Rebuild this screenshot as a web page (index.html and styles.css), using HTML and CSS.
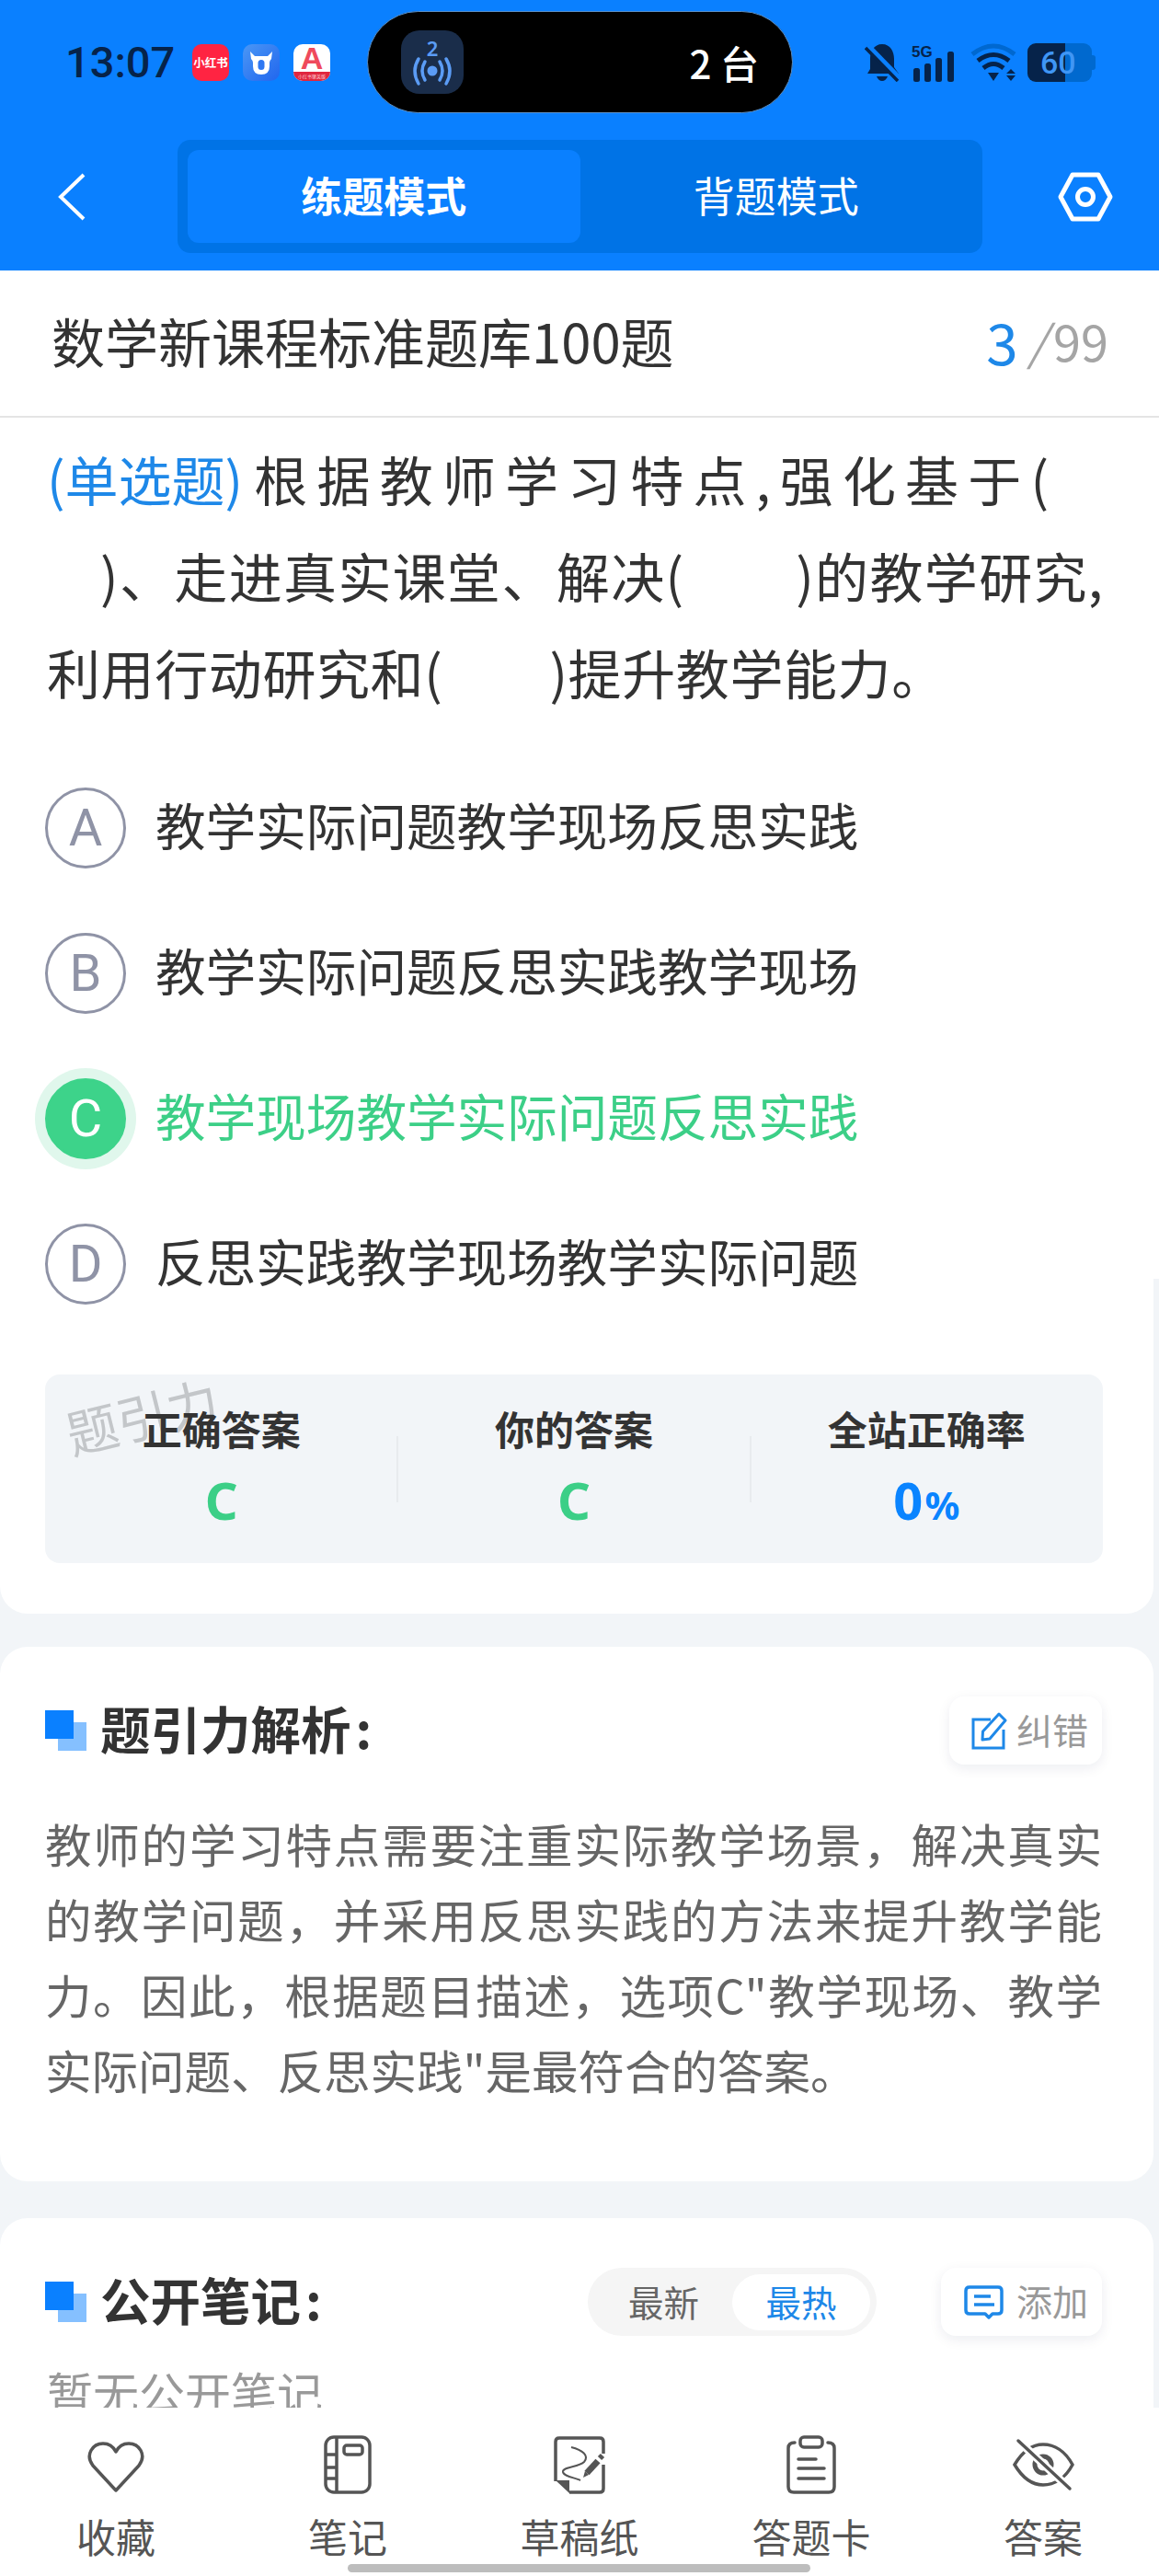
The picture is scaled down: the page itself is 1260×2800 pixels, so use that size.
FILE: index.html
```html
<!DOCTYPE html>
<html>
<head>
    <meta name="viewport" content="width=device-width, initial-scale=1">
    <meta charset="UTF-8">
    <title>题引力</title>
    <link rel="stylesheet" href="styles.css">
</head>
<body>
    <div id="page">
        <header class="topbar">
            <div class="statusrow">
                <span class="time">13:07</span>
                <div class="appicons">
                    <div class="appicon red">小红书</div>
                    <div class="appicon bluebull">
                        <svg width="40" height="40" viewBox="0 0 40 40">
                            <path d="M8 8 L13 13 H27 L32 8 L31 16 Q29 18 29 20 V24 Q29 33 20 33 Q11 33 11 24 V20 Q11 18 9 16 Z" fill="#fff"/>
                            <rect x="16.500" y="17" width="7" height="11" rx="3.500" fill="#2f78f2"/>
                        </svg>
                    </div>
                    <div class="appicon whitea">
                        <span class="aletter">A</span>
                        <span class="aband">小红书聚英版</span>
                    </div>
                </div>
                <div class="island">
                    <div class="casttile">
                        <svg width="68" height="69" viewBox="0 0 68 69" fill="none" stroke="#5b9cf5" stroke-width="3.500" stroke-linecap="round">
                            <text x="34" y="28" text-anchor="middle" class="casttwo">2</text>
                            <circle cx="34" cy="44" r="5.500" fill="#5b9cf5" stroke="none"/>
                            <path d="M26 34 Q20 44 26 54"/>
                            <path d="M42 34 Q48 44 42 54"/>
                            <path d="M19 31 Q11 44 19 58"/>
                            <path d="M49 31 Q57 44 49 58"/>
                        </svg>
                    </div>
                    <span class="islandtext">2 台</span>
                </div>
                <div class="statusicons">
                    <svg width="38" height="42" viewBox="0 0 38 42">
                        <path d="M19 1 C28 1 32 9 32 17 V26 L37 33 H3 L6 28 V17 C6 9 10 1 19 1Z" fill="#06234a"/>
                        <path d="M13 36 H25 Q23 41 19 41 Q15 41 13 36Z" fill="#06234a"/>
                        <path d="M2 2 L36 37" stroke="#0a80ff" stroke-width="7"/>
                        <path d="M1 5 L36 41" stroke="#06234a" stroke-width="3.500"/>
                    </svg>
                    <svg width="49" height="42" viewBox="0 0 49 42">
                        <text x="0" y="15" class="fiveg">5G</text>
                        <rect x="2" y="27" width="7" height="15" rx="2.500" fill="#06234a"/>
                        <rect x="14" y="22" width="7" height="20" rx="2.500" fill="#06234a"/>
                        <rect x="26" y="16" width="7" height="26" rx="2.500" fill="#06234a"/>
                        <rect x="39" y="9" width="7" height="33" rx="2.500" fill="#06234a"/>
                    </svg>
                    <svg class="wifi" width="50" height="42" viewBox="0 0 50 42" fill="none" stroke-width="5">
                        <path d="M2 12 Q25 -6 48 12" stroke="#0068d0"/>
                        <path d="M8 19 Q25 6 42 19" stroke="#06234a"/>
                        <path d="M14 27 Q25 18 36 27" stroke="#06234a"/>
                        <path d="M19 32 H31 L25 41Z" fill="#06234a"/>
                        <path d="M44 28 L49 33 H39Z M39 35 H49 L44 41Z" fill="#06234a"/>
                    </svg>
                    <div class="battery"><span>60</span></div>
                    <div class="batterynub"></div>
                </div>
            </div>
            <div class="navrow">
                <svg class="backicon" width="30" height="52" viewBox="0 0 30 52" fill="none" stroke="#fff" stroke-width="4">
                    <path d="M28 2 L3 26 L28 50"/>
                </svg>
                <div class="modeswitch">
                    <div class="mode on">练题模式</div>
                    <div class="mode">背题模式</div>
                </div>
                <svg class="seticon" width="60" height="54" viewBox="0 0 60 54" fill="none" stroke="#fff" stroke-width="5">
                    <path d="M16 3 H44 L57 27 L44 51 H16 L3 27Z" stroke-linejoin="round"/>
                    <circle cx="30" cy="27" r="8.500"/>
                </svg>
            </div>
        </header>

        <div class="papertitle">
            <span class="papername">数学新课程标准题库100题</span>
            <span class="papercount"><b>3</b><i>/</i><em>99</em></span>
        </div>

        <main class="scroller">
            <section class="card qcard">
                <div class="qline first"><span class="qtype">(单选题)</span>根据教师学习特点,强化基于(</div>
                <div class="qline second">)、走进真实课堂、解决(<span class="blank wide"></span>)的教学研究,</div>
                <div class="qline third">利用行动研究和(<span class="blank"></span>)提升教学能力。</div>

                <div class="options">
                    <div class="option"><div class="letter">A</div><div class="optext">教学实际问题教学现场反思实践</div></div>
                    <div class="option"><div class="letter">B</div><div class="optext">教学实际问题反思实践教学现场</div></div>
                    <div class="option right"><div class="letter">C</div><div class="optext">教学现场教学实际问题反思实践</div></div>
                    <div class="option"><div class="letter">D</div><div class="optext">反思实践教学现场教学实际问题</div></div>
                </div>

                <div class="stats">
                    <span class="watermark">题引力</span>
                    <div class="stat">
                        <div class="statlabel">正确答案</div>
                        <div class="statvalue green">C</div>
                    </div>
                    <div class="stat">
                        <div class="statlabel">你的答案</div>
                        <div class="statvalue green">C</div>
                    </div>
                    <div class="stat">
                        <div class="statlabel">全站正确率</div>
                        <div class="statvalue blue">0<small>%</small></div>
                    </div>
                </div>
            </section>

            <section class="card analysis">
                <div class="cardhead">
                    <div class="marks"><div class="mark back"></div><div class="mark front"></div></div>
                    <h2>题引力解析<span class="colon">:</span></h2>
                    <div class="minibtn fix">
                        <svg width="39" height="41" viewBox="0 0 39 41" fill="none" stroke="#1e88e8" stroke-width="3">
                            <path d="M21 8 H2 V39 H35 V19"/>
                            <path d="M12 30 L12.500 21 L30 2 L37 9 L20 29Z" stroke-linejoin="round"/>
                        </svg>
                        <span>纠错</span>
                    </div>
                </div>
                <p class="explain">教师的学习特点需要注重实际教学场景，解决真实的教学问题，并采用反思实践的方法来提升教学能力。因此，根据题目描述，选项C"教学现场、教学实际问题、反思实践"是最符合的答案。</p>
            </section>

            <section class="card notes">
                <div class="cardhead">
                    <div class="marks"><div class="mark back"></div><div class="mark front"></div></div>
                    <h2>公开笔记<span class="colon">:</span></h2>
                    <div class="sorter">
                        <div class="sortitem">最新</div>
                        <div class="sortitem on">最热</div>
                    </div>
                    <div class="minibtn add">
                        <svg width="43" height="37" viewBox="0 0 43 37" fill="none" stroke="#1e88e8" stroke-width="3.500">
                            <path d="M6 2 H37 Q41 2 41 6 V27 Q41 31 37 31 H31 L27 35 L23 31 H6 Q2 31 2 27 V6 Q2 2 6 2Z" stroke-linejoin="round"/>
                            <path d="M11 12 H29"/>
                            <path d="M11 21 H33"/>
                        </svg>
                        <span>添加</span>
                    </div>
                </div>
                <p class="emptynote">暂无公开笔记</p>
            </section>
        </main>

        <footer class="toolbar">
            <div class="tool">
                <svg width="62" height="64" viewBox="0 0 62 64" fill="none" stroke="#555" stroke-width="3.500" stroke-linejoin="round">
                    <path d="M31 60 L6 33 C-3 21 6 9 17 9 C23 9 28 12 31 18 C34 12 39 9 45 9 C56 9 65 21 56 33Z"/>
                </svg>
                <div class="toollabel">收藏</div>
            </div>
            <div class="tool">
                <svg width="52" height="64" viewBox="0 0 52 64" fill="none" stroke="#555" stroke-width="3.500">
                    <rect x="2" y="2" width="48" height="60" rx="9"/>
                    <path d="M14 2 V62"/>
                    <path d="M2 21 H14 M2 35 H14 M2 47 H14"/>
                    <rect x="22" y="11" width="20" height="10" rx="3"/>
                </svg>
                <div class="toollabel">笔记</div>
            </div>
            <div class="tool">
                <svg width="58" height="64" viewBox="12 12 58 64" fill="none" stroke="#555">
                    <path d="M30 74 H63 Q67 74 67 70 V44 M67 32 V19 Q67 15 63 15 H19 Q15 15 15 19 V62" stroke-width="3.500"/>
                    <path d="M15 61 H30 V75Z" fill="#555" stroke="none"/>
                    <path d="M32 25 C44 28 52 34 46 41 C40 47 22 46 23 52 C24 57 36 58 42 61" stroke-width="2"/>
                    <path d="M49 53 L61 40" stroke-width="7"/>
                    <path d="M45 58 L47 51 L51 55Z" fill="#555" stroke="none"/>
                    <path d="M63 37 L66 34" stroke-width="6"/>
                </svg>
                <div class="toollabel">草稿纸</div>
            </div>
            <div class="tool">
                <svg width="54" height="64" viewBox="0 0 54 64" fill="none" stroke="#555" stroke-width="3.500" stroke-linecap="round">
                    <rect x="15" y="2" width="24" height="11" rx="4"/>
                    <path d="M9 8 Q2 8 2 14 V56 Q2 62 8 62 H46 Q52 62 52 56 V14 Q52 8 45 8"/>
                    <path d="M13 26 H32 M13 36 H41 M13 47 H41"/>
                </svg>
                <div class="toollabel">答题卡</div>
            </div>
            <div class="tool">
                <svg width="68" height="64" viewBox="0 -5 68 64" fill="none" stroke="#555" stroke-width="3.500">
                    <path d="M3 27 C12 12 22 5 34 5 C46 5 58 12 66 27 C58 42 46 49 34 49 C22 49 12 42 3 27Z"/>
                    <circle cx="34" cy="27" r="9" stroke-width="5"/>
                    <path d="M7 1 L63 53" stroke="#fff" stroke-width="9"/>
                    <path d="M7 1 L63 53" stroke-width="3.500" stroke-linecap="round"/>
                </svg>
                <div class="toollabel">答案</div>
            </div>
            <div class="homebar"></div>
        </footer>
    </div>
</body>
</html>
```
FILE: styles.css
```css
body {
    margin: 0;
    background-color: white;
    font-family: "Noto Sans CJK SC", "Noto Sans", sans-serif;
    color: #333;
}
#page {
    width: 1260px;
    height: 2800px;
    display: flex;
    flex-direction: column;
    overflow: hidden;
}

/* blue header */
.topbar {
    background-color: #0a80ff;
    height: 294px;
    box-sizing: border-box;
    padding-top: 12px;
}
.statusrow {
    display: flex;
    align-items: center;
    height: 111px;
    padding-left: 71px;
}
.time {
    width: 117px;
    font-family: Roboto, sans-serif;
    font-size: 47px;
    font-weight: 500;
    line-height: 56px;
    color: #06234a;
}
.appicons {
    display: flex;
    gap: 15px;
    margin-left: 21px;
}
.appicon {
    width: 40px;
    height: 40px;
    border-radius: 10px;
    overflow: hidden;
}
.red {
    background-color: #ff2442;
    color: white;
    font-size: 12.500px;
    font-weight: 700;
    line-height: 40px;
    text-align: center;
    white-space: nowrap;
}
.bluebull {
    background: linear-gradient(135deg, #4a97f5, #2166ee);
}
.whitea {
    background-color: white;
    display: flex;
    flex-direction: column;
    align-items: center;
}
.aletter {
    height: 30px;
    font-family: "Liberation Sans", sans-serif;
    font-size: 34px;
    font-weight: 700;
    line-height: 30px;
    color: #ef4a5c;
}
.aband {
    width: 100%;
    height: 10px;
    background-color: #e0263e;
    color: #ffd0d6;
    font-size: 5px;
    line-height: 10px;
    text-align: center;
    white-space: nowrap;
}
.island {
    display: flex;
    align-items: center;
    justify-content: space-between;
    width: 463px;
    height: 111px;
    box-sizing: border-box;
    margin-left: 40px;
    padding: 0 36px 0 36px;
    background-color: black;
    border: 1px solid #5c8fc4;
    border-radius: 56px;
}
.casttile {
    width: 68px;
    height: 69px;
    background-color: #1a2d4a;
    border-radius: 20px;
}
.casttwo {
    font-family: "Noto Sans", sans-serif;
    font-size: 22px;
    font-weight: 600;
    fill: #5b9cf5;
    stroke: none;
}
.islandtext {
    color: white;
    font-size: 42px;
    font-weight: 500;
    white-space: nowrap;
}
.statusicons {
    display: flex;
    align-items: center;
    margin-left: 78px;
}
.statusicons svg {
    margin-right: 13px;
}
.statusicons .wifi {
    margin-left: 2px;
    margin-right: 12px;
}
.fiveg {
    font-family: "Liberation Sans", sans-serif;
    font-size: 17px;
    font-weight: 700;
    fill: #06234a;
}
.battery {
    width: 70px;
    height: 42px;
    border-radius: 9px;
    background: linear-gradient(90deg, #06234a 41px, #0069cf 41px);
    color: #3f96f5;
    font-family: Roboto, sans-serif;
    font-size: 34px;
    font-weight: 500;
    line-height: 42px;
    padding-left: 14px;
    box-sizing: border-box;
}
.batterynub {
    width: 4px;
    height: 16px;
    background-color: #0069cf;
    border-radius: 0 3px 3px 0;
}
.navrow {
    display: flex;
    align-items: center;
    margin-top: 29px;
    padding-left: 63px;
}
.modeswitch {
    display: flex;
    width: 875px;
    height: 123px;
    box-sizing: border-box;
    margin-left: 100px;
    padding: 11px;
    background-color: #0073e6;
    border-radius: 14px;
}
.mode {
    flex: 1;
    color: white;
    font-size: 45px;
    line-height: 97px;
    text-align: center;
    border-radius: 12px;
}
.mode.on {
    background-color: #0a80ff;
    font-weight: 700;
}
.seticon {
    margin-left: 82px;
}

/* paper title row */
.papertitle {
    display: flex;
    align-items: center;
    justify-content: space-between;
    height: 160px;
    box-sizing: border-box;
    padding: 0 55px 7px 56px;
    border-bottom: 2px solid #e4e4e4;
    background-color: white;
}
.papername {
    font-size: 58px;
}
.papercount {
    display: flex;
    align-items: center;
    color: #a5a5a5;
}
.papercount b {
    font-size: 62px;
    font-weight: 400;
    color: #1e88e8;
}
.papercount i {
    margin: 0 7px 0 11px;
    font-size: 52px;
}
.papercount em {
    font-size: 54px;
    font-style: normal;
}

/* scrolling content */
.scroller {
    flex: 1;
    overflow: hidden;
    background: linear-gradient(white 936px, #f2f5f8 936px);
}
.card {
    margin-right: 6px;
    background-color: white;
    border-radius: 30px;
}
.qcard {
    padding: 14px 55px 55px 49px;
    border-radius: 0 0 30px 30px;
}
.qline {
    height: 105px;
    font-size: 58px;
    line-height: 105px;
    white-space: nowrap;
}
.qline.first {
    width: 1089px;
    padding-left: 2px;
    white-space: normal;
    text-align-last: justify;
}
.qline.second {
    padding-left: 60px;
    white-space: normal;
    text-align-last: justify;
}
.qline.third {
    padding-left: 2px;
    letter-spacing: 0.600px;
}
.qtype {
    display: inline-block;
    color: #1e88e8;
    margin-right: 2px;
}
.blank {
    display: inline-block;
    width: 116px;
}
.blank.wide {
    width: 122px;
}
.options {
    display: flex;
    flex-direction: column;
    gap: 70px;
    margin-top: 73px;
}
.option {
    display: flex;
    align-items: center;
    gap: 32px;
    height: 88px;
    font-size: 54.600px;
}
.optext {
    padding-bottom: 9px;
}
.letter {
    width: 88px;
    height: 88px;
    box-sizing: border-box;
    border: 3px solid #8f93a6;
    border-radius: 50%;
    color: #8f93a6;
    font-family: Roboto, sans-serif;
    font-size: 56px;
    font-weight: 400;
    line-height: 82px;
    text-align: center;
}
.option.right {
    color: #3ccf87;
}
.option.right .letter {
    background-color: #3dd38a;
    border-color: #3dd38a;
    box-shadow: 0 0 0 11px #e0f7ec;
    color: white;
}
.stats {
    position: relative;
    display: flex;
    height: 205px;
    margin-top: 76px;
    background-color: #f2f5f8;
    border-radius: 16px;
}
.watermark {
    position: absolute;
    left: 21px;
    top: 3px;
    color: #c3c6c9;
    font-size: 56px;
    transform: rotate(-14deg);
}
.stat {
    position: relative;
    flex: 1;
    padding-top: 30px;
    text-align: center;
}
.stat + .stat::before {
    content: "";
    position: absolute;
    left: -1px;
    top: 67px;
    height: 72px;
    width: 2px;
    background-color: #e8ebee;
}
.statlabel {
    font-size: 43px;
    font-weight: 700;
    line-height: 56px;
}
.statvalue {
    margin-top: 20px;
    font-family: "Noto Sans", sans-serif;
    font-size: 56px;
    font-weight: 700;
    line-height: 60px;
}
.statvalue small {
    font-size: 42px;
    margin-left: 2px;
}
.green {
    color: #3ccf87;
}
.blue {
    color: #0a84ff;
}

.analysis {
    margin-top: 36px;
    padding: 54px 56px 81px 49px;
}
.notes {
    margin-top: 40px;
    padding: 54px 56px 40px 49px;
}
.cardhead {
    display: flex;
    align-items: center;
    height: 74px;
}
.cardhead h2 {
    flex: 1;
    margin: 0 0 0 15px;
    padding-bottom: 6px;
    font-size: 54.500px;
    font-weight: 700;
    line-height: 68px;
}
.colon {
    margin-left: 5px;
}
.marks {
    display: grid;
    grid-template-columns: 14px 17px 14px;
    grid-template-rows: 13px 18px 13px;
    width: 45px;
    height: 44px;
}
.mark {
    grid-row: 1 / 3;
    grid-column: 1 / 3;
}
.mark.back {
    grid-row: 2 / 4;
    grid-column: 2 / 4;
    background-color: #85c0ff;
}
.mark.front {
    background-color: #0a80ff;
}
.minibtn {
    display: flex;
    align-items: center;
    justify-content: flex-end;
    height: 74px;
    box-sizing: border-box;
    padding-right: 15px;
    gap: 10px;
    background-color: white;
    border-radius: 16px;
    box-shadow: 0 4px 14px rgba(0, 30, 80, 0.08);
    color: #999;
    font-size: 39px;
}
.minibtn span {
    padding-bottom: 5px;
}
.minibtn.fix {
    width: 166px;
}
.minibtn.add {
    width: 175px;
    margin-left: 70px;
    gap: 14px;
}
.sorter {
    display: flex;
    align-items: center;
    justify-content: space-between;
    width: 314px;
    height: 74px;
    box-sizing: border-box;
    padding: 0 7px 0 44px;
    background-color: #f5f5f5;
    border-radius: 37px;
    color: #666;
    font-size: 38.500px;
}
.sortitem {
    padding-bottom: 3px;
}
.sortitem.on {
    width: 150px;
    height: 61px;
    box-sizing: border-box;
    background-color: white;
    border-radius: 31px;
    color: #1e88e8;
    line-height: 58px;
    text-align: center;
}
.explain {
    margin: 44px 0 0 0;
    color: #666;
    font-size: 50.500px;
    line-height: 82px;
    text-align: justify;
}
.emptynote {
    margin: 25px 0 0 2px;
    color: #999;
    font-size: 50px;
    line-height: 70px;
}

/* bottom toolbar */
.toolbar {
    position: relative;
    display: grid;
    grid-template-columns: repeat(5, 1fr);
    height: 183px;
    box-sizing: border-box;
    padding-top: 30px;
    background-color: white;
}
.tool {
    display: flex;
    flex-direction: column;
    align-items: center;
}
.toollabel {
    margin-top: 20px;
    color: #555;
    font-size: 43px;
    line-height: 50px;
}
.homebar {
    position: absolute;
    left: 378px;
    top: 170px;
    width: 503px;
    height: 9px;
    background-color: #bdbdbd;
    border-radius: 5px;
}
```
